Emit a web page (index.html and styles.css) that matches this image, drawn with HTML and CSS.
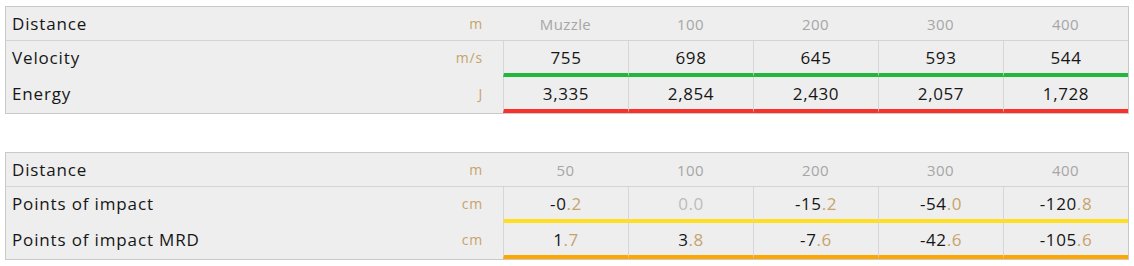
FILE: index.html
```html
<!DOCTYPE html>
<html>
<head>
<meta charset="utf-8">
<link rel="stylesheet" href="styles.css">
</head>
<body>
<div class="page">
  <table class="ballistics">
    <colgroup>
      <col class="c-label"><col class="c-unit">
      <col class="c-data"><col class="c-data"><col class="c-data"><col class="c-data"><col class="c-data">
    </colgroup>
    <tr class="head">
      <td class="label">Distance</td><td class="unit">m</td>
      <td class="dist">Muzzle</td><td class="dist">100</td><td class="dist">200</td><td class="dist">300</td><td class="dist">400</td>
    </tr>
    <tr class="row green">
      <td class="label">Velocity</td><td class="unit">m/s</td>
      <td class="val">755</td><td class="val">698</td><td class="val">645</td><td class="val">593</td><td class="val">544</td>
    </tr>
    <tr class="row red">
      <td class="label">Energy</td><td class="unit">J</td>
      <td class="val">3,335</td><td class="val">2,854</td><td class="val">2,430</td><td class="val">2,057</td><td class="val">1,728</td>
    </tr>
  </table>

  <table class="ballistics second">
    <colgroup>
      <col class="c-label"><col class="c-unit">
      <col class="c-data"><col class="c-data"><col class="c-data"><col class="c-data"><col class="c-data">
    </colgroup>
    <tr class="head">
      <td class="label">Distance</td><td class="unit">m</td>
      <td class="dist">50</td><td class="dist">100</td><td class="dist">200</td><td class="dist">300</td><td class="dist">400</td>
    </tr>
    <tr class="row yellow">
      <td class="label">Points of impact</td><td class="unit">cm</td>
      <td class="val">-0<span class="dec">.2</span></td><td class="val zero">0.0</td><td class="val">-15<span class="dec">.2</span></td><td class="val">-54<span class="dec">.0</span></td><td class="val">-120<span class="dec">.8</span></td>
    </tr>
    <tr class="row orange">
      <td class="label">Points of impact MRD</td><td class="unit">cm</td>
      <td class="val">1<span class="dec">.7</span></td><td class="val">3<span class="dec">.8</span></td><td class="val">-7<span class="dec">.6</span></td><td class="val">-42<span class="dec">.6</span></td><td class="val">-105<span class="dec">.6</span></td>
    </tr>
  </table>
</div>
</body>
</html>
```
FILE: styles.css
```css
html, body {
  margin: 0;
  padding: 0;
  background: #ffffff;
}

.page {
  padding: 6px 0 0 5px;
  font-family: "Open Sans", Lato, sans-serif;
  font-weight: 400;
  color: #161616;
}

.ballistics {
  width: 1123px;
  table-layout: fixed;
  border-collapse: separate;
  border-spacing: 0;
  border: 1px solid #c9c9c9;
  background: #eeeeee;
}

.ballistics.second {
  margin-top: 38px;
}

.c-label { width: 395px; }
.c-unit { width: 102px; }
.c-data { width: 125px; }

.ballistics td {
  padding: 0;
  white-space: nowrap;
}

.head td {
  height: 33px;
  border-bottom: 1px solid #d4d4d4;
}

.row td {
  height: 32px;
}

.label {
  padding-left: 6px !important;
  font-size: 17px;
  text-align: left;
  letter-spacing: 0.85px;
}

.unit {
  text-align: right;
  padding-right: 20px !important;
  font-size: 14px;
  color: #c6a36d;
  letter-spacing: 0.8px;
}

.dist {
  text-align: center;
  font-size: 15px;
  color: #a6a6a6;
  letter-spacing: 0.4px;
}

.val {
  text-align: center;
  font-size: 17px;
  border-left: 1px solid #d6d6d6;
  letter-spacing: 0.6px;
}

.row .val {
  border-bottom: 4px solid transparent;
  height: 32px;
}

.row .label, .row .unit {
  border-bottom: 4px solid transparent;
}

.green .val { border-bottom-color: #23b63c; }
.red .val { border-bottom-color: #f8312b; }
.yellow .val { border-bottom-color: #ffdf24; }
.orange .val { border-bottom-color: #ffa600; }

.dec {
  color: #c6a36d;
}

.zero {
  color: #bcbcbc;
}
```
